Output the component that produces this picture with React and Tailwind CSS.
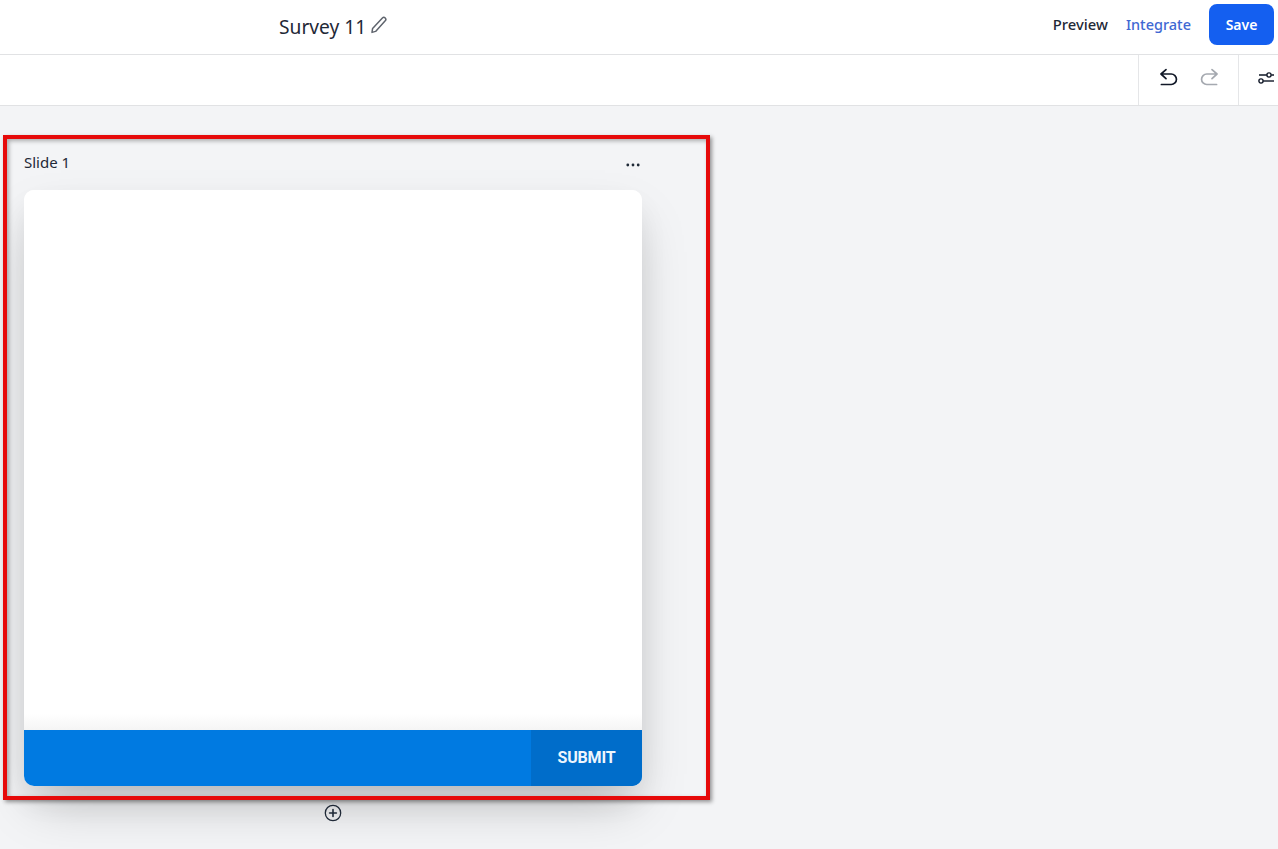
import React from "react";

export default function App() {
  return (
    <div className="relative h-[849px] w-[1278px] overflow-hidden bg-[#f3f4f6] font-['Noto_Sans',sans-serif] text-[#1f2937]">
      <header className="flex h-[55px] items-center border-b border-[#e1e2e4] bg-white pl-[279px] pr-1">
        <span className="mb-[1px] text-[19.2px] leading-none text-[#1f2937]">Survey 11</span>
        <svg className="ml-[4px] mb-[5px] h-[18px] w-[18px] text-[#5f646d]" viewBox="0 0 18 18" fill="none" stroke="currentColor" strokeWidth="1.5" strokeLinejoin="round" strokeLinecap="round">
          <path d="M2.6 12.4 12.4 2a2 2 0 0 1 2.8 0 2 2 0 0 1 0 2.8L5.6 15.4l-3.6 1 .6-4Z" />
        </svg>
        <div className="ml-auto mb-[5px] flex items-center">
          <span className="text-[14.8px] font-medium">Preview</span>
          <span className="ml-[18px] text-[14.5px] font-medium text-[#3f68d3]">Integrate</span>
          <button className="ml-[18px] h-[41px] w-[65px] rounded-lg bg-[#145ff0] text-[14px] font-semibold text-white">Save</button>
        </div>
      </header>
      <div className="flex h-[51px] justify-end border-b border-[#e1e2e4] bg-white">
        <div className="flex w-[101px] items-center gap-[22px] border-x border-[#e5e6e8] pl-[19px]">
          <svg className="mb-[5px] h-5 w-5 text-[#111827]" viewBox="0 0 20 20" fill="none" stroke="currentColor" strokeWidth="1.7" strokeLinecap="round" strokeLinejoin="round">
            <path d="M8 1.6 3 6l5 4.6M3 6h10.2a5.2 5.2 0 0 1 0 10.5H3.4" />
          </svg>
          <svg className="mb-[5px] h-5 w-5 text-[#a5a9b0]" viewBox="0 0 20 20" fill="none" stroke="currentColor" strokeWidth="1.7" strokeLinecap="round" strokeLinejoin="round">
            <path d="M12 1.6 17 6l-5 4.6M17 6H6.8a5.2 5.2 0 0 0 0 10.5H16.6" />
          </svg>
        </div>
        <div className="flex w-[39px] items-center pl-[19px]">
          <svg className="mb-[5px] h-[16px] w-[16px] shrink-0 text-[#111827]" viewBox="0 0 16 16" fill="none" stroke="currentColor" strokeWidth="1.4">
            <circle cx="11" cy="5" r="2.1" />
            <path d="M1 5h7.8M13.2 5H16" />
            <circle cx="3" cy="11" r="2.1" />
            <path d="M5.2 11H16" />
          </svg>
        </div>
      </div>
      <main className="pl-[24px]">
        <div className="flex h-[84px] w-[618px] items-start justify-between pt-[46px]">
          <span className="text-[15px] leading-5 text-[#1f2937]">Slide 1</span>
          <svg className="mr-[1px] mt-[5px] h-4 w-4 text-[#1f2937]" viewBox="0 0 16 16" fill="currentColor">
            <circle cx="2.8" cy="8" r="1.4" />
            <circle cx="8" cy="8" r="1.4" />
            <circle cx="13.2" cy="8" r="1.4" />
          </svg>
        </div>
        <div className="flex h-[596px] w-[618px] flex-col overflow-hidden rounded-[10px] bg-white shadow-[0_25px_50px_-12px_rgba(0,0,0,0.25),0_16px_30px_rgba(0,0,0,0.05)]">
          <div className="flex-1 bg-gradient-to-b from-white from-[97%] to-[#f5f5f5]" />
          <div className="flex h-[56px] justify-end bg-[#007ae1]">
            <button className="w-[111px] bg-[#006dca] font-['Roboto',sans-serif] text-[16px] font-bold tracking-[-0.2px] text-[#eef6fd]">SUBMIT</button>
          </div>
        </div>
        <div className="mt-[18px] flex w-[618px] justify-center">
          <svg className="h-[18px] w-[18px] text-[#1f2937]" viewBox="0 0 18 18" fill="none" stroke="currentColor" strokeWidth="1.3" strokeLinecap="round">
            <circle cx="9" cy="9" r="7.7" />
            <path d="M9 5.6v6.8M5.6 9h6.8" strokeWidth="1.6" />
          </svg>
        </div>
      </main>
      <div className="absolute left-[3px] top-[135px] h-[665px] w-[707px] border-[4px] border-[#e60a0a] shadow-[2px_2px_4px_rgba(0,0,0,0.4),inset_2px_2px_4px_rgba(0,0,0,0.3)]" />
    </div>
  );
}
